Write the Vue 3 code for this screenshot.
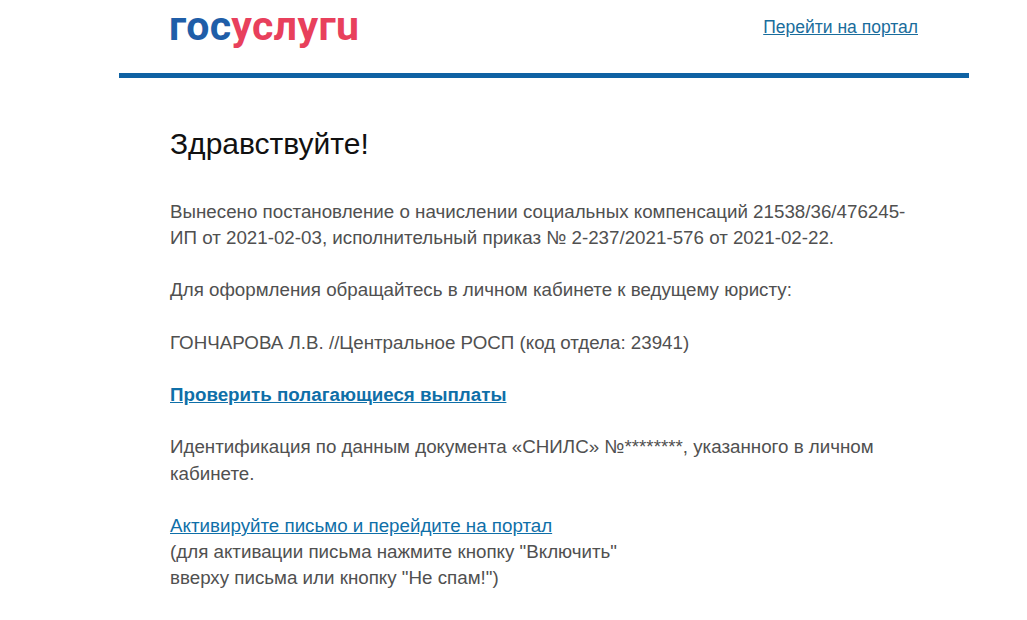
<script setup>
</script>

<template>
  <div class="page">
    <div class="mail">
      <header class="head">
        <div class="logo"><span class="blue">гос</span><span class="red">услугu</span></div>
        <a class="portal" href="#">Перейти на портал</a>
      </header>
      <main class="body">
        <h1>Здравствуйте!</h1>
        <p>Вынесено постановление о начислении социальных компенсаций 21538/36/476245-<br>ИП от 2021-02-03, исполнительный приказ № 2-237/2021-576 от 2021-02-22.</p>
        <p>Для оформления обращайтесь в личном кабинете к ведущему юристу:</p>
        <p>ГОНЧАРОВА Л.В. //Центральное РОСП (код отдела: 23941)</p>
        <p><a class="strong" href="#">Проверить полагающиеся выплаты</a></p>
        <p>Идентификация по данным документа «СНИЛС» №********, указанного в личном<br>кабинете.</p>
        <p><a href="#">Активируйте письмо и перейдите на портал</a><br>(для активации письма нажмите кнопку "Включить"<br>вверху письма или кнопку "Не спам!")</p>
      </main>
    </div>
  </div>
</template>

<style>
body { margin: 0; background: #fff; }
</style>

<style scoped>
.page {
  width: 1027px;
  height: 620px;
  overflow: hidden;
  font-family: "Liberation Sans", Arial, sans-serif;
  background: #fff;
}
.mail {
  width: 850px;
  margin-left: 119px;
}
.head {
  height: 73px;
  border-bottom: 5px solid #0f62a3;
  padding: 0 51px;
  display: flex;
  justify-content: space-between;
  align-items: flex-start;
}
.logo {
  margin-left: -1px;
  margin-top: 1px;
  font-family: Roboto, sans-serif;
  font-weight: 700;
  font-size: 41px;
  line-height: 50px;
  letter-spacing: 0.35px;
}
.blue { color: #1f5ea8; }
.red { color: #e8405c; }
.portal {
  margin-top: 17px;
  font-size: 17.5px;
  line-height: 20px;
  color: #1a6d9c;
}
.body {
  padding: 48px 51px 0;
  font-size: 18.75px;
  line-height: 26.15px;
  color: #505050;
}
h1 {
  margin: 0 0 37px;
  font-size: 30px;
  font-weight: 400;
  line-height: 36px;
  color: #111;
}
p { margin: 0 0 26.15px; }
a { color: #0f6fa8; }
.strong { font-weight: 700; }
</style>
